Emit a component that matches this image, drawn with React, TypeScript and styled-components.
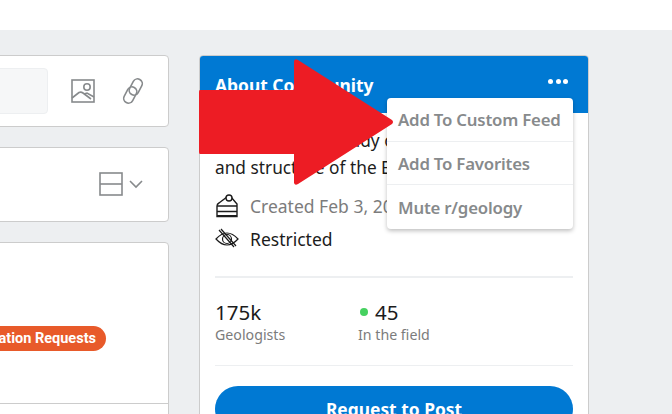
import styled, { createGlobalStyle } from 'styled-components';

const GlobalStyle = createGlobalStyle`
  html, body {
    margin: 0;
    padding: 0;
    background: #edeff1;
    font-family: 'Noto Sans', 'Open Sans', sans-serif;
  }
`;

const Page = styled.div`
  position: relative;
  width: 672px;
  height: 414px;
  overflow: hidden;
`;

const TopBar = styled.div`
  height: 30px;
  background: #ffffff;
`;

const Main = styled.div`
  display: flex;
  align-items: flex-start;
  gap: 30px;
  margin-left: -20px;
  padding-top: 25px;
`;

const LeftColumn = styled.div`
  flex: none;
  width: 189px;
  display: flex;
  flex-direction: column;
  gap: 20px;
`;

const Card = styled.div`
  box-sizing: border-box;
  background: #ffffff;
  border: 1px solid #cccccc;
  border-radius: 4px;
`;

const ComposeCard = styled(Card)`
  height: 72px;
  display: flex;
  align-items: center;
  padding-right: 21px;
`;

const FakeInput = styled.div`
  flex: none;
  width: 67px;
  height: 46px;
  margin-right: 23px;
  background: #f6f7f8;
  border: 1px solid #edeff1;
  border-radius: 4px;
  box-sizing: border-box;
`;

const IconSlot = styled.div`
  flex: none;
  width: 24px;
  height: 26px;
  margin-right: 26px;
  color: #878a8c;

  &:last-child {
    margin-right: 0;
  }
`;

const SortCard = styled(Card)`
  height: 75px;
  display: flex;
  justify-content: flex-end;
  align-items: center;
  gap: 6px;
  padding: 0 25px 1px 0;
  color: #878a8c;
`;

const PostCard = styled(Card)`
  height: 200px;
  display: flex;
  flex-direction: column;
`;

const PostBody = styled.div`
  height: 161px;
  box-sizing: border-box;
  padding: 83px 62px 0 0;
  display: flex;
  justify-content: flex-end;
  border-bottom: 1px solid #cccccc;
`;

const Flair = styled.span`
  height: 25px;
  padding: 0 10px 0 14px;
  margin-left: -60px;
  border-radius: 0 13px 13px 0;
  background: #e85a2a;
  color: #ffffff;
  font-family: Roboto, sans-serif;
  font-size: 14.5px;
  font-weight: 700;
  line-height: 25px;
  white-space: nowrap;
`;

const Sidebar = styled(Card)`
  flex: none;
  width: 390px;
  height: 420px;
  overflow: hidden;
`;

const SidebarHeader = styled.div`
  height: 57px;
  box-sizing: border-box;
  padding: 0 20px 0 15px;
  display: flex;
  align-items: center;
  justify-content: space-between;
  background: #0079d3;
  color: #ffffff;
`;

const SidebarTitle = styled.span`
  font-size: 17.4px;
  font-weight: 700;
`;

const Dots = styled.span`
  display: flex;
  gap: 2.5px;
  padding-bottom: 7px;

  i {
    width: 5px;
    height: 5px;
    border-radius: 50%;
    background: #ffffff;
  }
`;

const SidebarBody = styled.div`
  padding: 14px 15px 0;
`;

const Description = styled.p`
  margin: 0 0 8px;
  font-size: 17.3px;
  line-height: 27px;
  color: #1c1c1c;
  white-space: nowrap;
`;

const InfoRow = styled.div`
  display: flex;
  align-items: center;
  gap: 11px;
  height: 33px;
  font-size: 17.5px;
  color: ${({ $muted }: { $muted?: boolean }) => ($muted ? '#7c7c7c' : '#1c1c1c')};
  white-space: nowrap;
`;

const Stats = styled.div`
  display: flex;
  margin-top: 21px;
  padding-top: 21px;
  padding-bottom: 20px;
  border-top: 2px solid #edeff1;
  border-bottom: 1px solid #edeff1;
`;

const Stat = styled.div`
  width: 143px;
`;

const StatValue = styled.div`
  display: flex;
  align-items: center;
  gap: 7px;
  font-size: 20.5px;
  line-height: 26px;
  color: #1c1c1c;
`;

const OnlineDot = styled.span`
  width: 8px;
  height: 8px;
  border-radius: 50%;
  background: #46d160;
  margin-left: 2px;
`;

const StatLabel = styled.div`
  font-size: 14.2px;
  line-height: 20px;
  color: #7c7c7c;
`;

const RequestButton = styled.button`
  display: block;
  width: 100%;
  height: 46px;
  margin-top: 20px;
  padding: 0;
  border: 0;
  border-radius: 23px;
  background: #0079d3;
  color: #ffffff;
  font-family: inherit;
  font-size: 17.4px;
  font-weight: 700;
`;

const Menu = styled.div`
  position: absolute;
  left: 387px;
  top: 98px;
  width: 186px;
  background: #ffffff;
  border-radius: 4px;
  box-shadow: 0 2px 4px rgba(0, 0, 0, 0.25);
`;

const MenuItem = styled.div`
  height: 43.7px;
  box-sizing: border-box;
  padding: 1px 0 0 11px;
  display: flex;
  align-items: center;
  border-bottom: 1px solid #edeff1;
  color: #878a8c;
  font-size: 16.8px;
  font-weight: 600;
  letter-spacing: -0.2px;
  white-space: nowrap;

  &:last-child {
    border-bottom: 0;
  }
`;

const Arrow = styled.svg`
  position: absolute;
  left: 198px;
  top: 58px;
`;

const ImageIcon = () => (
  <svg width="24" height="26" viewBox="0 0 24 26" fill="none" stroke="currentColor" strokeWidth="1.6">
    <rect x="1" y="2" width="22" height="22" />
    <circle cx="16" cy="9" r="3.2" />
    <path d="M1 20 L8 14.5 Q10 13.5 12 15 L20 21 M13 16 L16 15 L23 19" />
  </svg>
);

const LinkIcon = () => (
  <svg width="24" height="26" viewBox="0 0 24 26" fill="none" stroke="currentColor" strokeWidth="1.6">
    <rect x="10" y="0.5" width="9.5" height="17" rx="4.75" transform="rotate(28 14.75 9)" />
    <rect x="4.5" y="8.5" width="9.5" height="17" rx="4.75" transform="rotate(28 9.25 17)" />
  </svg>
);

const LayoutIcon = () => (
  <svg width="24" height="24" viewBox="0 0 24 24" fill="none" stroke="currentColor" strokeWidth="1.6">
    <rect x="1" y="1" width="22" height="22" />
    <path d="M1 12 H23" />
  </svg>
);

const ChevronIcon = () => (
  <svg width="14" height="9" viewBox="0 0 14 9" fill="none" stroke="currentColor" strokeWidth="1.6">
    <path d="M1 1 L7 7 L13 1" />
  </svg>
);

const CakeIcon = () => (
  <svg width="24" height="24" viewBox="0 0 24 24" fill="none" stroke="#1c1c1c" strokeWidth="1.4">
    <path d="M2 22.5 V12 Q2 10 4 9 L12 3 H16 L22 10 V22.5 Z" />
    <circle cx="14" cy="4" r="3" fill="#ffffff" />
    <path d="M2 12 H22 M2 17.5 H22" />
    <path d="M2 22 H22" strokeWidth="2" />
  </svg>
);

const HiddenIcon = () => (
  <svg width="24" height="22" viewBox="0 0 24 22" fill="none" stroke="#1c1c1c" strokeWidth="1.2">
    <path d="M1 11 Q12 -1 23 11 Q12 23 1 11 Z" />
    <circle cx="12" cy="11" r="4.5" />
    <path d="M4 2 L19 19 M6 1 L21 18" />
  </svg>
);

export default function App() {
  return (
    <>
      <GlobalStyle />
      <Page>
        <TopBar />
        <Main>
          <LeftColumn>
            <ComposeCard>
              <FakeInput />
              <IconSlot>
                <ImageIcon />
              </IconSlot>
              <IconSlot>
                <LinkIcon />
              </IconSlot>
            </ComposeCard>
            <SortCard>
              <LayoutIcon />
              <ChevronIcon />
            </SortCard>
            <PostCard>
              <PostBody>
                <Flair>ation Requests</Flair>
              </PostBody>
            </PostCard>
          </LeftColumn>
          <Sidebar>
            <SidebarHeader>
              <SidebarTitle>About Community</SidebarTitle>
              <Dots>
                <i />
                <i />
                <i />
              </Dots>
            </SidebarHeader>
            <SidebarBody>
              <Description>
                Geology is the study of the composition
                <br />
                and structure of the Earth
              </Description>
              <InfoRow $muted>
                <CakeIcon />
                Created Feb 3, 2008
              </InfoRow>
              <InfoRow>
                <HiddenIcon />
                Restricted
              </InfoRow>
              <Stats>
                <Stat>
                  <StatValue>175k</StatValue>
                  <StatLabel>Geologists</StatLabel>
                </Stat>
                <Stat>
                  <StatValue>
                    <OnlineDot />
                    45
                  </StatValue>
                  <StatLabel>In the field</StatLabel>
                </Stat>
              </Stats>
              <RequestButton>Request to Post</RequestButton>
            </SidebarBody>
          </Sidebar>
        </Main>
        <Menu>
          <MenuItem>Add To Custom Feed</MenuItem>
          <MenuItem>Add To Favorites</MenuItem>
          <MenuItem>Mute r/geology</MenuItem>
        </Menu>
        <Arrow width="200" height="130" viewBox="0 0 200 130">
          <path
            d="M2 32 H96 V3 Q97 0 100 2 L194 62 Q196 64 194 66 L100 126 Q97 128 96 125 V96 H2 Q1 96 1 94 V34 Q1 32 2 32 Z"
            fill="#ed1c24"
          />
        </Arrow>
      </Page>
    </>
  );
}
